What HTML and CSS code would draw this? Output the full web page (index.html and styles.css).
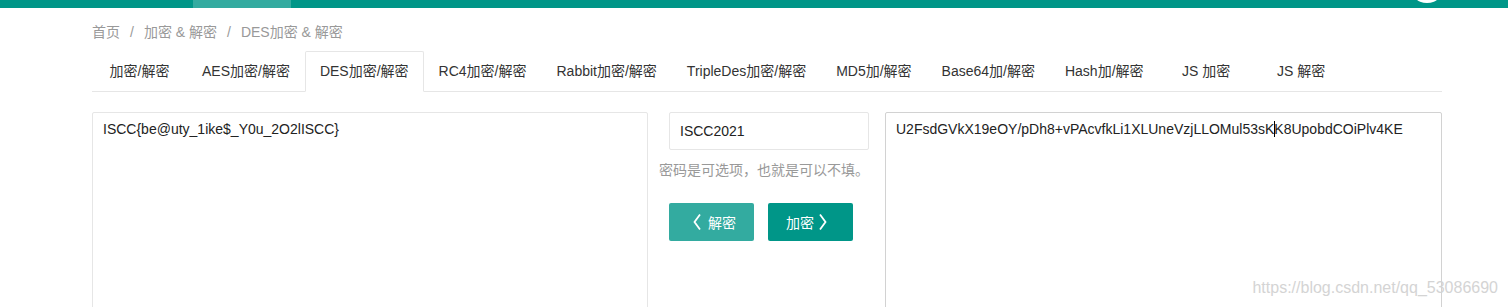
FILE: index.html
```html
<!DOCTYPE html>
<html lang="zh-CN">
<head>
    <meta charset="UTF-8">
    <meta name="viewport" content="width=device-width, initial-scale=1.0">
    <title>DES加密 &amp; 解密</title>
    <link rel="stylesheet" href="styles.css">
</head>
<body>

<div class="header">
    <div class="nav-this"></div>
    <div class="avatar"></div>
</div>

<div class="main">
    <div class="breadcrumb">
        <a href="#">首页</a><span class="sep">/</span><a href="#">加密 &amp; 解密</a><span class="sep">/</span><cite>DES加密 &amp; 解密</cite>
    </div>

    <ul class="tab-title">
        <li>加密/解密</li>
        <li>AES加密/解密</li>
        <li class="this">DES加密/解密</li>
        <li>RC4加密/解密</li>
        <li>Rabbit加密/解密</li>
        <li>TripleDes加密/解密</li>
        <li>MD5加/解密</li>
        <li>Base64加/解密</li>
        <li>Hash加/解密</li>
        <li>JS 加密</li>
        <li>JS 解密</li>
    </ul>

    <div class="crypt-row">
        <div class="textarea">ISCC{be@uty_1ike$_Y0u_2O2lISCC}</div>

        <div class="middle">
            <input type="text" class="pwd-input" value="ISCC2021">
            <div class="word-aux">密码是可选项，也就是可以不填。</div>
            <div class="btn-group">
                <button class="btn btn-decrypt">
                    <svg width="8" height="18" viewBox="0 0 8 18"><path d="M7 1.5 L1.5 9 L7 16.5" fill="none" stroke="#fff" stroke-width="1.8"/></svg>
                    解密
                </button>
                <button class="btn btn-encrypt">
                    加密
                    <svg width="8" height="18" viewBox="0 0 8 18"><path d="M1 1.5 L6.5 9 L1 16.5" fill="none" stroke="#fff" stroke-width="1.8"/></svg>
                </button>
            </div>
        </div>

        <div class="textarea focused">U2FsdGVkX19eOY/pDh8+vPAcvfkLi1XLUneVzjLLOMul53sK<span class="caret"></span>K8UpobdCOiPlv4KE</div>
    </div>
</div>

<div class="watermark">https://blog.csdn.net/qq_53086690</div>

</body>
</html>
```

FILE: styles.css
```css
body {
    font-family: "Liberation Sans", "Noto Sans CJK SC", sans-serif;
    font-size: 14px;
    color: #333;
    background-color: #fff;
    margin: 0;
    padding: 0;
    overflow: hidden;
}

.header {
    display: flex;
    align-items: flex-start;
    height: 8px;
    overflow: hidden;
    background-color: #009688;
}

.nav-this {
    margin-left: 193px;
    width: 98px;
    height: 8px;
    background-color: #33aba0;
}

.avatar {
    margin-left: auto;
    margin-right: 63px;
    margin-top: -33px;
    width: 36px;
    height: 36px;
    border-radius: 50%;
    background-color: #fff;
}

.main {
    margin-left: 92px;
    width: 1350px;
}

.breadcrumb {
    margin-top: 14px;
    line-height: 20px;
    color: #999;
}

.breadcrumb a,
.breadcrumb cite {
    color: #999;
    text-decoration: none;
    font-style: normal;
}

.breadcrumb .sep {
    margin: 0 10px;
    color: #999;
}

.tab-title {
    display: flex;
    align-items: flex-start;
    list-style: none;
    margin: 9px 0 0;
    padding: 0;
    height: 40px;
    border-bottom: 1px solid #e6e6e6;
}

.tab-title li {
    min-width: 65px;
    padding: 0 15px;
    height: 40px;
    line-height: 40px;
    text-align: center;
    white-space: nowrap;
    cursor: pointer;
}

.tab-title li.this {
    padding: 0 14px;
    height: 39px;
    line-height: 39px;
    border: 1px solid #e6e6e6;
    border-bottom-color: #fff;
    border-radius: 2px 2px 0 0;
}

.crypt-row {
    display: grid;
    grid-template-columns: 556px 237px 557px;
    margin-top: 20px;
}

.textarea {
    height: 300px;
    padding: 6px 10px;
    line-height: 20px;
    border: 1px solid #e6e6e6;
    border-radius: 2px;
    color: #222;
    box-sizing: border-box;
    word-break: break-all;
}

.textarea.focused {
    border-color: #d2d2d2;
}

.caret {
    display: inline-block;
    width: 1px;
    height: 16px;
    margin-right: -1px;
    vertical-align: -3px;
    background-color: #000;
}

.middle {
    padding-left: 21px;
}

.pwd-input {
    display: block;
    width: 200px;
    height: 38px;
    padding: 0 10px;
    border: 1px solid #e6e6e6;
    border-radius: 2px;
    box-sizing: border-box;
    font-family: inherit;
    font-size: 14px;
    color: #222;
    outline: none;
}

.word-aux {
    margin: 10px 0 0 -10px;
    line-height: 20px;
    color: #999;
    white-space: nowrap;
}

.btn-group {
    display: flex;
    gap: 14px;
    margin-top: 23px;
}

.btn {
    display: flex;
    align-items: center;
    width: 85px;
    height: 38px;
    border: none;
    border-radius: 2px;
    color: #fff;
    font-family: inherit;
    font-size: 14px;
    cursor: pointer;
    box-sizing: border-box;
}

.btn-decrypt {
    background-color: #33aba0;
    padding: 0 0 0 24px;
    gap: 7px;
}

.btn-encrypt {
    background-color: #009688;
    padding: 0 0 0 18px;
    gap: 5px;
}

.watermark {
    position: absolute;
    top: 278px;
    right: 10px;
    line-height: 20px;
    font-size: 16px;
    color: #d4d4d4;
    white-space: nowrap;
}
```
